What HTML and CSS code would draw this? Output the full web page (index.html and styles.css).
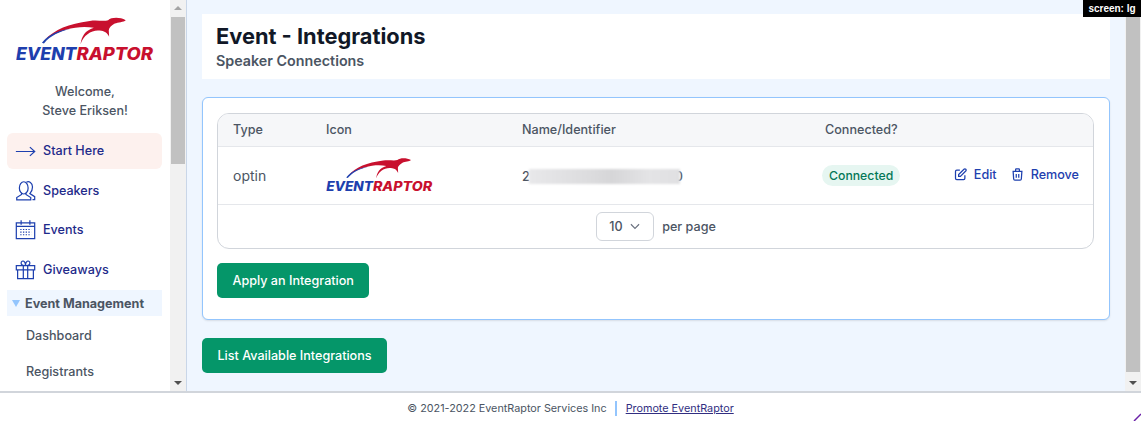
FILE: index.html
```html
<!DOCTYPE html>
<html lang="en">
<head>
<meta charset="utf-8">
<title>Event - Integrations</title>
<link rel="stylesheet" href="styles.css">
</head>
<body>
<svg class="defs" width="0" height="0">
  <symbol id="logo" viewBox="48 50 415 140">
    <path fill="#c8102e" d="M135 120C165 90 205 72 270 64C290 60 310 66 325 62C335 53 360 52 378 62C372 68 355 68 345 72C335 78 328 84 327 92L328 112C322 100 316 96 305 94C280 88 252 104 242 134C246 110 255 94 282 85C245 78 190 84 135 120Z"/>
    <path fill="#1e40af" d="M126 130C146 105 178 92 213 88C180 96 152 108 132 132Z"/>
    <text class="logo-text" x="48" y="183" textLength="182" lengthAdjust="spacingAndGlyphs" fill="#1e3fae">EVENT</text>
    <text class="logo-text" x="230" y="183" textLength="230" lengthAdjust="spacingAndGlyphs" fill="#c8102e">RAPTOR</text>
  </symbol>
</svg>
<div class="badge">screen: lg</div>
<div class="app">
  <div class="top">
    <aside class="sidebar">
      <div class="sidenav">
        <svg class="logo-big"><use href="#logo"/></svg>
        <p class="welcome">Welcome,<br>Steve Eriksen!</p>
        <nav class="menu">
          <a class="item active">
            <svg class="nav-icon" viewBox="0 0 24 24"><path d="M1 12h21.500M17 7l5.500 5-5.500 5"/></svg>
            <span>Start Here</span>
          </a>
          <a class="item">
            <svg class="nav-icon" viewBox="0 0 24 24"><ellipse cx="10" cy="9" rx="5" ry="7"/><path d="M7.500 14.500v2L2 20v2.800h16V20l-5.500-3.500v-2"/><path d="M13 2.500C16 1 20 3 20 8c0 3.500-1.500 6-3 7.500L22.500 19v3.500H20"/></svg>
            <span>Speakers</span>
          </a>
          <a class="item">
            <svg class="nav-icon" viewBox="0 0 24 24"><path d="M1.500 4.500h21v18h-21zM1.500 8.500h21M7 1.500v5M17 1.500v5"/><path class="dots" d="M6 12h12.500M6 15h12.500M6 18h12.500"/></svg>
            <span>Events</span>
          </a>
          <a class="item">
            <svg class="nav-icon" viewBox="0 0 24 24"><path d="M1.500 7.500h21v5h-21zM3 12.500v10h18v-10M9.500 7.500v15M14.500 7.500v15M12 7.500C9 7.500 7 6.500 7 4.500S9 2 10 2.500 12 5 12 7.500zM12 7.500c3 0 5-1 5-3S15 2 14 2.500 12 5 12 7.500z"/></svg>
            <span>Giveaways</span>
          </a>
        </nav>
        <div class="section"><span class="caret"></span>Event Management</div>
        <a class="sub sub-first">Dashboard</a>
        <a class="sub">Registrants</a>
      </div>
      <div class="vbar">
        <span class="arrow-up"></span>
        <div class="track"><div class="thumb thumb-side"></div></div>
        <span class="arrow-down"></span>
      </div>
    </aside>
    <main class="main">
      <div class="content">
        <header class="panel">
          <h1>Event - Integrations</h1>
          <h2>Speaker Connections</h2>
        </header>
        <section class="card">
          <div class="table">
            <div class="row head">
              <div class="c-type">Type</div>
              <div class="c-icon">Icon</div>
              <div class="c-name">Name/Identifier</div>
              <div class="c-conn">Connected?</div>
            </div>
            <div class="row body">
              <div class="c-type type-val">optin</div>
              <div class="c-icon"><svg class="logo-small"><use href="#logo"/></svg></div>
              <div class="c-name name-val">2<span class="blur"></span>0</div>
              <div class="c-conn"><span class="pill">Connected</span></div>
              <div class="c-act">
                <a class="act"><svg class="act-icon" viewBox="0 0 24 24"><path d="M11 5H6a2 2 0 00-2 2v11a2 2 0 002 2h11a2 2 0 002-2v-5m-1.414-9.414a2 2 0 112.828 2.828L11.828 15H9v-2.828l8.586-8.586z"/></svg>Edit</a>
                <a class="act"><svg class="act-icon" viewBox="0 0 24 24"><path d="M19 7l-.867 12.142A2 2 0 0116.138 21H7.862a2 2 0 01-1.995-1.858L5 7m5 4v6m4-6v6m1-10V4a1 1 0 00-1-1h-4a1 1 0 00-1 1v3M4 7h16"/></svg>Remove</a>
              </div>
            </div>
            <div class="pager">
              <div class="select">10<svg class="chev" viewBox="0 0 24 24"><path d="M19 9l-7 7-7-7"/></svg></div>
              <span>per page</span>
            </div>
          </div>
          <button class="btn" type="button">Apply an Integration</button>
        </section>
        <button class="btn" type="button">List Available Integrations</button>
      </div>
      <div class="vbar">
        <span class="arrow-up"></span>
        <div class="track"><div class="thumb thumb-main"></div></div>
        <span class="arrow-down"></span>
      </div>
    </main>
  </div>
  <footer class="footer">
    <span>© 2021-2022 EventRaptor Services Inc</span>
    <a class="promo">Promote EventRaptor</a>
  </footer>
</div>
<svg class="corner" viewBox="0 0 8 8"><path d="M1 8L8 1"/></svg>
</body>
</html>
```
FILE: styles.css
```css
* { box-sizing: border-box; }
html, body { margin: 0; height: 421px; overflow: hidden; }
body { font-family: Inter, "Liberation Sans", sans-serif; color: #4b5563; background: #fff; font-size: 12.600px; font-weight: 500; position: relative; }
.defs { position: absolute; }
.badge { position: absolute; top: 0; right: 0; height: 17px; width: 58px; background: #000; color: #fff; font-size: 10px; line-height: 17px; text-align: center; font-family: "Liberation Sans", sans-serif; font-weight: 700; }
.app { height: 421px; display: flex; flex-direction: column; }
.top { height: 391px; display: flex; }
.sidebar { width: 187px; display: flex; border-right: 1px solid #c9d6e8; background: #fff; }
.sidenav { width: 170px; height: 391px; overflow: hidden; flex: none; }
.logo-big { display: block; width: 138px; height: 47px; margin: 16px 0 0 16px; }
.logo-text { font-family: Inter, "Liberation Sans", sans-serif; font-weight: 800; font-style: italic; font-size: 51px; }
.welcome { margin: 19px 0 0; text-align: center; line-height: 19px; height: 38px; }
.menu { margin: 13px 8px 0 7px; display: flex; flex-direction: column; }
.item { display: flex; align-items: center; height: 39.5px; padding-left: 8px; gap: 7px; color: #1e2a8a; }
.item.active span { margin-bottom: 2px; }
.item.active { height: 36px; background: #fdf1ee; border-radius: 6px; margin-bottom: 1.500px; }
.nav-icon { width: 21px; height: 21px; fill: none; stroke: #1e40af; stroke-width: 1.400; flex: none; }
.nav-icon .dots { stroke-dasharray: 1.500 1.600; }
.section { margin: 1px 8px 0 7px; height: 26px; background: #eff6ff; font-weight: 700; line-height: 26px; padding: 1px 0 0 5px; display: flex; align-items: center; gap: 5px; }
.caret { width: 0; height: 0; border-left: 4px solid transparent; border-right: 4px solid transparent; border-top: 7px solid #93c5fd; }
.sub { display: block; padding-left: 26px; height: 36px; line-height: 36px; }
.sub-first { margin-top: 2px; }
.vbar { width: 16px; height: 391px; background: #f1f1f1; display: flex; flex-direction: column; align-items: center; flex: none; }
.arrow-up, .arrow-down { width: 0; height: 0; flex: none; border-left: 4px solid transparent; border-right: 4px solid transparent; }
.arrow-up { border-bottom: 4px solid #a3a3a3; margin: 6px 0 7px; }
.arrow-down { border-top: 4px solid #505050; margin: 7px 0 6px; }
.track { flex: 1; width: 100%; }
.thumb { background: #c1c1c1; margin: 0 1px; }
.thumb-side { height: 147px; }
.thumb-main { height: 355px; }
.main { flex: 1; display: flex; background: #eff6ff; min-width: 0; }
.content { flex: 1; padding: 14px 15px 0 15px; min-width: 0; }
.panel { background: #fff; height: 65px; padding: 8px 14px; }
h1 { margin: 0; font-size: 21.800px; line-height: 28px; font-weight: 700; color: #111827; }
h2 { margin: 2px 0 0; font-size: 14.300px; line-height: 18px; font-weight: 600; color: #4b5563; }
.card { margin-top: 18px; height: 223px; background: #fff; border: 1px solid #93c5fd; border-radius: 6px; padding: 15px 15px 15px 14px; box-shadow: 0 1px 2px rgba(0,0,0,.1); }
.table { border: 1px solid #d1d5db; border-radius: 12px; height: 136px; overflow: hidden; }
.row { display: flex; align-items: center; border-bottom: 1px solid #e5e7eb; }
.head { height: 33px; background: #f6f7f9; padding-bottom: 2px; }
.body { height: 58px; }
.c-type { width: 108px; padding-left: 15px; flex: none; }
.c-icon { width: 196px; flex: none; }
.c-name { width: 303px; flex: none; }
.c-conn { width: 125px; flex: none; }
.head .c-conn { width: auto; }
.type-val { font-size: 14px; font-weight: 400; margin-bottom: 1px; }
.name-val { padding-top: 2px; }
.logo-small { display: block; width: 107px; height: 36px; margin-top: -2px; }
.blur { display: inline-block; width: 151px; height: 15px; margin: 0 -5px 0 -1px; vertical-align: -3px; background: linear-gradient(90deg, #e8e8ea, #dcdcde 40%, #d6d6d8 55%, #e4e4e6 80%, #e0e0e2); filter: blur(1px); }
.pill { display: inline-block; height: 21px; line-height: 21px; padding: 0 7px; border-radius: 11px; margin-left: -3px; background: #e6f6f1; color: #047857; font-size: 12.250px; }
.c-act { flex: 1; display: flex; justify-content: flex-end; gap: 13px; padding-right: 14px; margin-top: -3px; }
.act { display: flex; align-items: center; gap: 6px; color: #1e40af; }
.act-icon { width: 15px; height: 15px; fill: none; stroke: #1e40af; stroke-width: 2; }
.pager { height: 43px; display: flex; align-items: center; justify-content: center; gap: 8px; padding: 0 0 1px 1px; }
.select { width: 58px; height: 29px; border: 1px solid #d1d5db; border-radius: 6px; display: flex; align-items: center; justify-content: space-between; padding: 0 11px 0 12px; }
.chev { width: 14px; height: 14px; fill: none; stroke: #6b7280; stroke-width: 2; }
.btn { display: block; border: 0; height: 35px; padding: 0 15.500px; background: #059669; color: #fff; border-radius: 5px; font: 500 12.600px Inter, "Liberation Sans", sans-serif; }
.card .btn { margin-top: 14px; }
.content > .btn { margin-top: 18px; }
.footer { height: 30px; border-top: 2px solid #d1d5db; display: flex; align-items: center; justify-content: center; font-size: 10.800px; font-weight: 400; gap: 8px; padding: 3px 0 0 0; }
.promo { color: #312e81; text-decoration: underline; border-left: 2px solid #93c5fd; padding-left: 9px; line-height: 15px; }
.corner { position: absolute; right: 0; bottom: 0; width: 8px; height: 8px; fill: none; stroke: #6b21a8; stroke-width: 1.500; }
```
